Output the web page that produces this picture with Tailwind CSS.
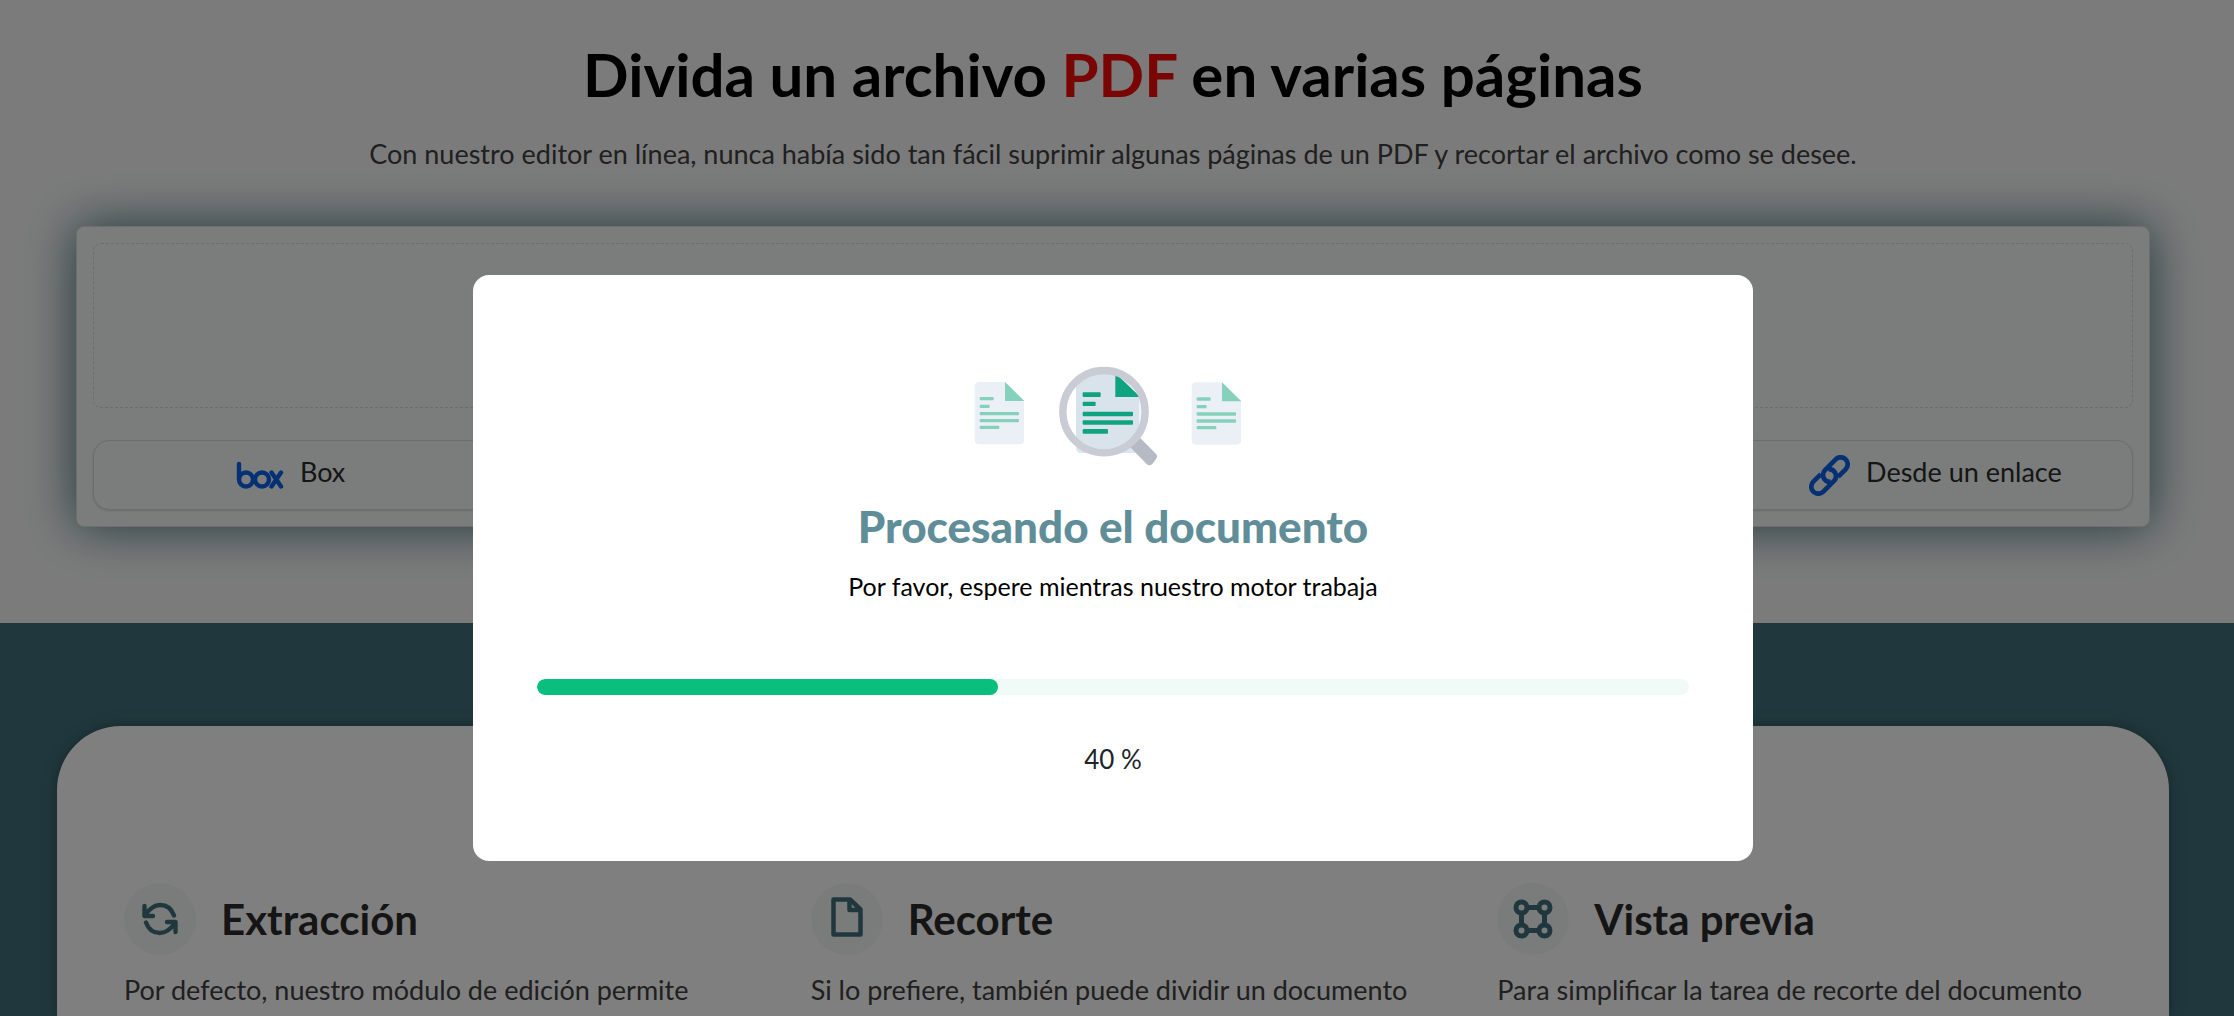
<!DOCTYPE html>
<html lang="es">
<head>
  <meta charset="UTF-8" />
  <meta name="viewport" content="width=device-width, initial-scale=1.0"/>
  <title>Dividir PDF</title>
  <script src="https://cdn.jsdelivr.net/npm/@tailwindcss/browser@4"></script>
</head>
<body class="bg-[#f7f7f7] text-[#2b2b2b] font-['Lato',sans-serif] overflow-hidden">
  <main class="min-h-screen flex flex-col">
    <!-- Upload -->
    <section class="pl-[76px] pr-[84px] pt-[34px] pb-24">
      <h1 class="text-center text-[60px] leading-[80px] font-bold text-black">Divida un archivo <span class="text-[#f50a0a]">PDF</span> en varias páginas</h1>
      <p class="text-center text-[27px] leading-10 mt-5 text-[#404040]">Con nuestro editor en línea, nunca había sido tan fácil suprimir algunas páginas de un PDF y recortar el archivo como se desee.</p>

      <div class="mt-[52px] p-4 rounded-lg border border-[#dcdcdc] bg-[#f6fbf8] shadow-[0_0_50px_#40707a]">
        <div class="h-[165px] rounded-lg border border-dashed border-[#d8dbd9]"></div>
        <div class="mt-8 grid grid-cols-5 gap-4">
          <button type="button" class="h-[70px] flex items-center justify-center gap-4 pb-1.5 rounded-2xl border border-[#d8dbd9] bg-[#f6fbf8] shadow-sm text-[27px]">
            <svg class="w-12 h-8 mt-2" viewBox="0 0 48 32" fill="none" stroke="#0a62e8" stroke-width="4.400" stroke-linecap="round">
              <path d="M3 4V19"/>
              <circle cx="10" cy="19.500" r="7"/>
              <circle cx="26" cy="19.500" r="7"/>
              <path d="M35.500 12.500L45 26.500M45 12.500L35.500 26.500"/>
            </svg>
            Box
          </button>
          <button type="button" class="col-start-5 h-[70px] flex items-center justify-center gap-4 pb-1.5 rounded-2xl border border-[#d8dbd9] bg-[#f6fbf8] shadow-sm text-[27px]">
            <svg class="w-[41px] h-[41px] mt-1.5" viewBox="-61 -61 122 122" fill="none" stroke="#0a62e8" stroke-width="14">
              <g transform="rotate(-45)">
                <path id="link" d="M-15 -21H-47A21 21 0 0 0 -47 21H-2A21 21 0 0 0 11 -16"/>
                <use href="#link" transform="rotate(180)"/>
              </g>
            </svg>
            Desde un enlace
          </button>
        </div>
      </div>
    </section>

    <!-- Features -->
    <section class="grow bg-[#40707a] pl-[57px] pr-[65px] pt-[103px] flex">
      <div class="grow rounded-t-[64px] bg-white shadow-[0_0_16px_rgb(0_0_0/0.3)] pt-[157px] px-[67px]">
        <div class="grid grid-cols-3 gap-[82px]">
          <article>
            <div class="flex items-center gap-[25px]">
              <span class="size-[72px] shrink-0 rounded-full bg-[#f4f9f7] flex items-center justify-center">
                <svg class="size-9" viewBox="0 0 36 36" fill="none" stroke="#40707a" stroke-width="4.400" stroke-linecap="round" stroke-linejoin="round">
                  <path d="M32 14.500C29.500 7.500 24 4 18 4 12 4 8 7 3 14"/>
                  <path d="M2.500 5V15H11"/>
                  <path d="M4 21.500C6.500 28.500 12 32 18 32 24 32 28 29 33 22"/>
                  <path d="M33.500 31V21H25"/>
                </svg>
              </span>
              <h2 class="text-[42px] leading-[48px] font-bold">Extracción</h2>
            </div>
            <p class="mt-[15px] text-[27px] leading-10 text-[#404040] whitespace-nowrap">Por defecto, nuestro módulo de edición permite</p>
          </article>
          <article>
            <div class="flex items-center gap-[25px]">
              <span class="size-[72px] shrink-0 rounded-full bg-[#f4f9f7] flex items-center justify-center">
                <svg class="w-8 h-10 mb-1" viewBox="0 0 32 40" fill="none" stroke="#40707a" stroke-width="4.500" stroke-linejoin="round">
                  <path d="M2.500 2.500H19L29.500 12.500V37.500H2.500Z"/>
                  <path d="M18.500 3V13H29"/>
                </svg>
              </span>
              <h2 class="text-[42px] leading-[48px] font-bold">Recorte</h2>
            </div>
            <p class="mt-[15px] text-[27px] leading-10 text-[#404040] whitespace-nowrap">Si lo prefiere, también puede dividir un documento</p>
          </article>
          <article>
            <div class="flex items-center gap-[25px]">
              <span class="size-[72px] shrink-0 rounded-full bg-[#f4f9f7] flex items-center justify-center">
                <svg class="size-10" viewBox="0 0 40 40" fill="none" stroke="#40707a" stroke-width="5">
                  <circle cx="8.500" cy="8.500" r="5.500"/>
                  <circle cx="31.500" cy="8.500" r="5.500"/>
                  <circle cx="8.500" cy="31.500" r="5.500"/>
                  <circle cx="31.500" cy="31.500" r="5.500"/>
                  <path d="M14 8.500H26M14 31.500H26M8.500 14V26M31.500 14V26"/>
                </svg>
              </span>
              <h2 class="text-[42px] leading-[48px] font-bold">Vista previa</h2>
            </div>
            <p class="mt-[15px] text-[27px] leading-10 text-[#404040] whitespace-nowrap">Para simplificar la tarea de recorte del documento</p>
          </article>
        </div>
      </div>
    </section>
  </main>

  <!-- Progress dialog -->
  <div class="fixed inset-0 bg-black/50 flex items-start justify-center pt-[275px] pr-2">
    <div role="dialog" aria-labelledby="dialogTitle" class="w-full max-w-[1280px] rounded-2xl bg-white pt-[75px] pb-[82px] px-16 flex flex-col items-center">
      <svg class="w-[300px] h-[130px]" viewBox="9 0 900 390">
        <defs>
          <clipPath id="lens"><circle cx="432" cy="185" r="116"/></clipPath>
          <g id="sheet">
            <path fill="#eaf0f5" d="M14 0H91L148 57V174Q148 187 135 187H13Q0 187 0 174V14Q0 0 14 0Z"/>
            <path fill="#86d1bb" d="M91 0L149 57H91Z"/>
            <g fill="#86d1bb">
              <rect x="15" y="45" width="42" height="10" rx="3"/>
              <rect x="15" y="68" width="30" height="10" rx="3"/>
              <rect x="15" y="90" width="118" height="10" rx="3"/>
              <rect x="15" y="111" width="118" height="10" rx="3"/>
              <rect x="15" y="131" width="59" height="10" rx="3"/>
            </g>
          </g>
        </defs>
        <use href="#sheet" x="44" y="96"/>
        <use href="#sheet" x="695" y="97"/>
        <rect x="348" y="230" width="188" height="79" rx="14" fill="#dbe6f0"/>
        <circle cx="432" cy="185" r="116" fill="#fff"/>
        <g clip-path="url(#lens)">
          <path fill="#d9e3ec" d="M348 50H466L538 141V309H348Z"/>
          <path fill="#fff" d="M466 50H560V141H538Z"/>
          <path fill="#eef3f8" d="M538 141H560V309H538Z"/>
          <path fill="#10a37f" d="M466 70L541 141H466Z"/>
        </g>
        <g fill="#10a37f">
          <rect x="368" y="127" width="54" height="14" rx="3"/>
          <rect x="368" y="155" width="39" height="13" rx="3"/>
          <rect x="368" y="185" width="151" height="14" rx="3"/>
          <rect x="368" y="211" width="151" height="13" rx="3"/>
          <rect x="368" y="237" width="76" height="14" rx="3"/>
        </g>
        <path fill="#b5bac4" d="M511 292L541 264L588 312Q595 320 588 327L577 342Q568 350 560 342Z"/>
        <circle cx="432" cy="185" r="123.500" fill="none" stroke="#c9ccd5" stroke-width="22"/>
      </svg>
      <h2 id="dialogTitle" class="mt-[18px] text-[44px] leading-[56px] font-black text-[#5f8d98]">Procesando el documento</h2>
      <p class="mt-3.5 text-[25px] leading-9 text-black">Por favor, espere mientras nuestro motor trabaja</p>
      <div id="progressTrack" role="progressbar" aria-valuemin="0" aria-valuemax="100" aria-valuenow="40" class="mt-[75px] w-full h-4 rounded-full bg-[#f0faf7] overflow-hidden">
        <div id="progressBar" class="h-full rounded-full bg-[#0abf7e]" style="width: 40%"></div>
      </div>
      <div id="progressText" class="mt-11 text-[26px] leading-10 text-[#212529]">40 %</div>
    </div>
  </div>

  <script>
    const setProgress = (value) => {
      document.getElementById("progressTrack").setAttribute("aria-valuenow", value);
      document.getElementById("progressBar").style.width = `${value}%`;
      document.getElementById("progressText").textContent = `${value} %`;
    };

    setProgress(40);
  </script>
</body>
</html>
